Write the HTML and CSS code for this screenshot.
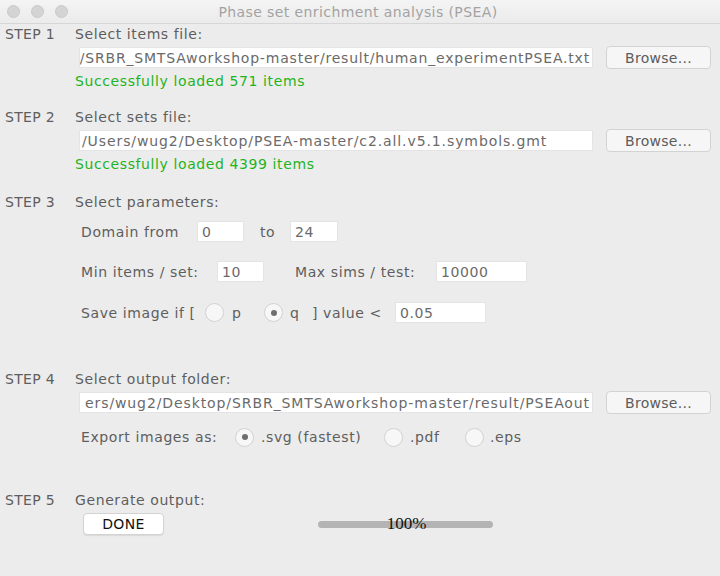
FILE: index.html
```html
<!DOCTYPE html>
<html>
<head>
<meta charset="utf-8">
<link rel="stylesheet" href="styles.css">
</head>
<body>
<div class="window">
  <div class="titlebar">
    <div class="lights"><span class="light"></span><span class="light"></span><span class="light"></span></div>
    <div class="title">Phase set enrichment analysis (PSEA)</div>
  </div>
  <div class="content">
    <section class="step s1">
      <div class="step-label">STEP 1</div>
      <div class="step-body">
        <div class="line">Select items file:</div>
        <div class="file-row">
          <div class="field path end tight"><span>/SRBR_SMTSAworkshop-master/result/human_experimentPSEA.txt</span></div>
          <div class="btn browse">Browse...</div>
        </div>
        <div class="line ok">Successfully loaded 571 items</div>
      </div>
    </section>
    <section class="step s2">
      <div class="step-label">STEP 2</div>
      <div class="step-body">
        <div class="line">Select sets file:</div>
        <div class="file-row">
          <div class="field path"><span>/Users/wug2/Desktop/PSEA-master/c2.all.v5.1.symbols.gmt</span></div>
          <div class="btn browse">Browse...</div>
        </div>
        <div class="line ok">Successfully loaded 4399 items</div>
      </div>
    </section>
    <section class="step s3">
      <div class="step-label">STEP 3</div>
      <div class="step-body">
        <div class="line">Select parameters:</div>
        <div class="param-row r1">
          <span class="lbl w-dom">Domain from</span>
          <div class="field num w47">0</div>
          <span class="lbl w-to">to</span>
          <div class="field num w48">24</div>
        </div>
        <div class="param-row r2">
          <span class="lbl w-min">Min items / set:</span>
          <div class="field num w47">10</div>
          <span class="lbl w-max">Max sims / test:</span>
          <div class="field num w91">10000</div>
        </div>
        <div class="param-row r3">
          <span class="lbl w-save">Save image if [</span>
          <span class="radio"></span>
          <span class="lbl w-p">p</span>
          <span class="radio on"></span>
          <span class="lbl w-q">q</span>
          <span class="lbl w-val">] value &lt;</span>
          <div class="field num w91">0.05</div>
        </div>
      </div>
    </section>
    <section class="step s4">
      <div class="step-label">STEP 4</div>
      <div class="step-body">
        <div class="line">Select output folder:</div>
        <div class="file-row">
          <div class="field path end"><span>ers/wug2/Desktop/SRBR_SMTSAworkshop-master/result/PSEAout</span></div>
          <div class="btn browse">Browse...</div>
        </div>
        <div class="param-row export">
          <span class="lbl w-exp">Export images as:</span>
          <span class="radio on"></span>
          <span class="lbl w-svg">.svg (fastest)</span>
          <span class="radio"></span>
          <span class="lbl w-pdf">.pdf</span>
          <span class="radio"></span>
          <span class="lbl w-eps">.eps</span>
        </div>
      </div>
    </section>
    <section class="step s5">
      <div class="step-label">STEP 5</div>
      <div class="step-body">
        <div class="line">Generate output:</div>
        <div class="gen-row">
          <div class="btn done">DONE</div>
          <div class="progress"><div class="bar"></div><span class="pct">100%</span></div>
        </div>
      </div>
    </section>
  </div>
</div>
</body>
</html>
```

FILE: styles.css
```css
html, body {
  margin: 0;
  padding: 0;
  background: #ececec;
}
.window {
  width: 720px;
  height: 576px;
  background: #ececec;
  font-family: "DejaVu Sans", "Liberation Sans", sans-serif;
  font-size: 14px;
  letter-spacing: 0.6px;
  color: #5e5e5e;
  overflow: hidden;
}
.titlebar {
  height: 24px;
  box-sizing: border-box;
  border-bottom: 1px solid #d6d6d6;
  background: linear-gradient(#f4f4f4, #ebebeb);
  display: flex;
  align-items: center;
}
.lights {
  display: flex;
  gap: 11px;
  margin-left: 7px;
}
.light {
  width: 13px;
  height: 13px;
  border-radius: 50%;
  background: #d4d4d4;
  box-sizing: border-box;
  border: 1px solid #c9c9c9;
}
.title {
  flex: 1;
  text-align: center;
  font-size: 14px;
  letter-spacing: 0.4px;
  color: #a3a3a3;
  margin-right: 72px;
}
.content {
  display: flex;
  flex-direction: column;
}
.step {
  display: grid;
  grid-template-columns: 75px 1fr;
}
.step-label {
  padding-left: 5px;
  line-height: 18px;
  height: 18px;
  letter-spacing: 0.3px;
  white-space: nowrap;
}
.step-body {
  display: flex;
  flex-direction: column;
}
.line {
  line-height: 18px;
  height: 18px;
  white-space: nowrap;
}
.ok {
  color: #1eb41e;
  margin-top: 3px;
}
.s1 { margin-top: 1px; }
.s2 { margin-top: 18px; }
.s3 { margin-top: 20px; }
.s4 { margin-top: 47px; }
.s5 { margin-top: 44px; }

.file-row {
  display: flex;
  align-items: center;
  height: 23px;
  margin-top: 3px;
  padding-left: 4px;
}
.field {
  height: 21px;
  box-sizing: border-box;
  background: #ffffff;
  border: 1px solid #e4e4e4;
  display: flex;
  align-items: center;
  color: #6a6a6a;
  white-space: nowrap;
  overflow: hidden;
  flex: none;
}
.path {
  width: 514px;
  padding: 0 2px;
  letter-spacing: 0.9px;
}
.path.tight {
  letter-spacing: 0.8px;
  padding: 0 2px 0 1px;
}
.path.end {
  justify-content: flex-end;
}
.btn {
  box-sizing: border-box;
  border: 1px solid #d3d3d3;
  border-radius: 4px;
  display: flex;
  align-items: center;
  justify-content: center;
}
.browse {
  width: 105px;
  height: 23px;
  margin-left: 13px;
  background: #f6f6f6;
  color: #5c5c5c;
  letter-spacing: 0.3px;
}

.param-row {
  display: flex;
  align-items: center;
  height: 21px;
  padding-left: 6px;
  white-space: nowrap;
}
.r1 { margin-top: 10px; }
.r2 { margin-top: 19px; }
.r3 { margin-top: 20px; }
.lbl {
  line-height: 18px;
  flex: none;
}
.num {
  padding: 0 4px;
}
.w47 { width: 47px; }
.w48 { width: 48px; }
.w91 { width: 91px; }
.w-dom { width: 116px; }
.w-to { width: 30px; margin-left: 16px; }
.w-min { width: 136px; }
.w-max { width: 141px; margin-left: 31px; }
.w-save { width: 124px; }
.w-p { width: 32px; margin-left: 8px; }
.w-q { width: 22px; margin-left: 7px; }
.w-val { width: 83px; }
.w-exp { width: 154px; }
.w-svg { width: 123px; margin-left: 7px; }
.w-pdf { width: 55px; margin-left: 7px; }
.w-eps { margin-left: 6px; }

.radio {
  width: 19px;
  height: 19px;
  box-sizing: border-box;
  border-radius: 50%;
  border: 1px solid #d2d2d2;
  background: #f7f7f7;
  display: inline-flex;
  align-items: center;
  justify-content: center;
  flex: none;
}
.radio.on::after {
  content: "";
  width: 6px;
  height: 6px;
  border-radius: 50%;
  background: #6e6e6e;
}
.export {
  height: 20px;
  margin-top: 13px;
}

.gen-row {
  display: flex;
  align-items: center;
  margin-top: 4px;
  height: 22px;
  padding-left: 8px;
}
.done {
  width: 81px;
  height: 22px;
  background: #ffffff;
  color: #111111;
  letter-spacing: 0.4px;
  box-shadow: 0 1px 1px rgba(0,0,0,0.08);
}
.progress {
  position: relative;
  margin-left: 154px;
  width: 175px;
  height: 22px;
  display: flex;
  align-items: center;
  justify-content: center;
}
.bar {
  width: 175px;
  height: 7px;
  border-radius: 4px;
  background: #b4b4b4;
}
.pct {
  position: absolute;
  left: 0;
  right: 0;
  text-align: center;
  font-family: "Liberation Serif", serif;
  font-size: 17px;
  letter-spacing: 0;
  color: #111111;
  line-height: 22px;
  padding-left: 2px;
}
```
